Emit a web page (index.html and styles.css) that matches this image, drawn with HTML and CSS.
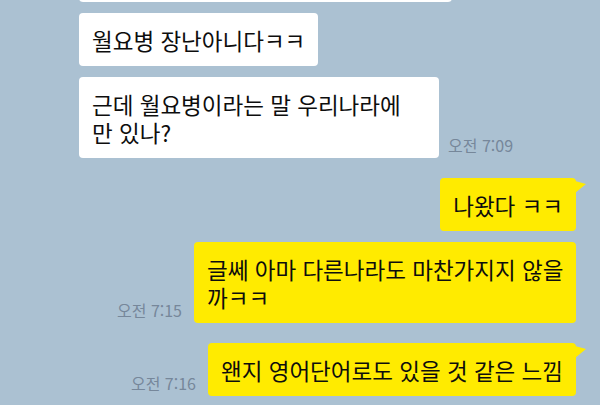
FILE: index.html
```html
<!DOCTYPE html>
<html lang="ko">
<head>
<meta charset="utf-8">
<link rel="stylesheet" href="styles.css">
</head>
<body>
<div class="chat">
  <div class="row them first">
    <div class="bubble white top-cut"></div>
  </div>
  <div class="row them">
    <div class="bubble white">월요병 장난아니다ㅋㅋ</div>
  </div>
  <div class="row them">
    <div class="bubble white wide-them">근데 월요병이라는 말 우리나라에<br>만 있나?</div>
    <span class="time">오전 7:09</span>
  </div>
  <div class="row me group">
    <div class="bubble yellow tail">나왔다 ㅋㅋ</div>
  </div>
  <div class="row me">
    <span class="time">오전 7:15</span>
    <div class="bubble yellow wide-me">글쎄 아마 다른나라도 마찬가지지 않을<br>까ㅋㅋ</div>
  </div>
  <div class="row me group">
    <span class="time">오전 7:16</span>
    <div class="bubble yellow tail">왠지 영어단어로도 있을 것 같은 느낌</div>
  </div>
</div>
</body>
</html>
```
FILE: styles.css
```css
html, body {
  margin: 0;
  padding: 0;
  background: #abc1d2;
  height: 100%;
  overflow: hidden;
}

.chat {
  display: flex;
  flex-direction: column;
  padding: 0 24px 0 79px;
  margin-top: -51px;
  font-family: "Noto Sans CJK KR", "Noto Sans", sans-serif;
}

.row {
  display: flex;
  align-items: flex-end;
  margin-top: 11px;
}

.row.first {
  margin-top: 0;
}

.row.group {
  margin-top: 20px;
}

.row.them {
  justify-content: flex-start;
  gap: 9px;
}

.row.me {
  justify-content: flex-end;
  gap: 12px;
}

.bubble {
  position: relative;
  box-sizing: border-box;
  padding: 13px 13px 12px;
  font-size: 22.5px;
  line-height: 28px;
  color: #0d0d0d;
  border-radius: 4px;
  white-space: nowrap;
}

.white {
  background: #ffffff;
}

.yellow {
  background: #ffeb00;
}

.top-cut {
  width: 373px;
  height: 53px;
}

.wide-them {
  width: 360px;
}

.wide-me {
  width: 382px;
}

.tail::after {
  content: "";
  position: absolute;
  top: 1px;
  right: -10px;
  width: 11px;
  height: 14px;
  background: #ffeb00;
  clip-path: polygon(0 2px, 100% 5px, 0 100%);
}

.time {
  font-size: 16px;
  line-height: 20px;
  color: #76879a;
  white-space: nowrap;
  padding-bottom: 3px;
}
```
